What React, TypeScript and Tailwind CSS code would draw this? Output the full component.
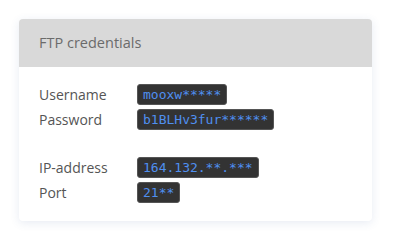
const rows = [
  [
    { label: "Username", value: "mooxw*****" },
    { label: "Password", value: "b1BLHv3fur******" },
  ],
  [
    { label: "IP-address", value: "164.132.**.***" },
    { label: "Port", value: "21**" },
  ],
]

export default function App() {
  return (
    <div className="w-[400px] h-[250px] bg-white pt-[19px] pl-[19px] font-['Open_Sans',sans-serif]">
      <div className="w-[353px] rounded-[4px] bg-white shadow-[0_2px_10px_rgba(60,90,160,0.12)] overflow-hidden">
        {/* header */}
        <div className="h-[48px] bg-[#d9d9d9] pl-[20px] flex items-center text-[14.5px] text-[#6b6b6b]">
          FTP credentials
        </div>

        {/* body */}
        <div className="px-[20px] pt-[17px] pb-[18px] flex flex-col gap-[27px]">
          {rows.map((group, i) => (
            <div key={i} className="flex flex-col gap-[4px]">
              {group.map((r) => (
                <div key={r.label} className="flex items-center h-[21px]">
                  <span className="w-[98px] text-[14px] text-[#555]">{r.label}</span>
                  <code className="h-[21px] flex items-center px-[5px] rounded-[3px] bg-[#333] border border-[#555] text-[13px] text-[#4f8ff0] font-['DejaVu_Sans_Mono',monospace]">
                    {r.value}
                  </code>
                </div>
              ))}
            </div>
          ))}
        </div>
      </div>
    </div>
  )
}
